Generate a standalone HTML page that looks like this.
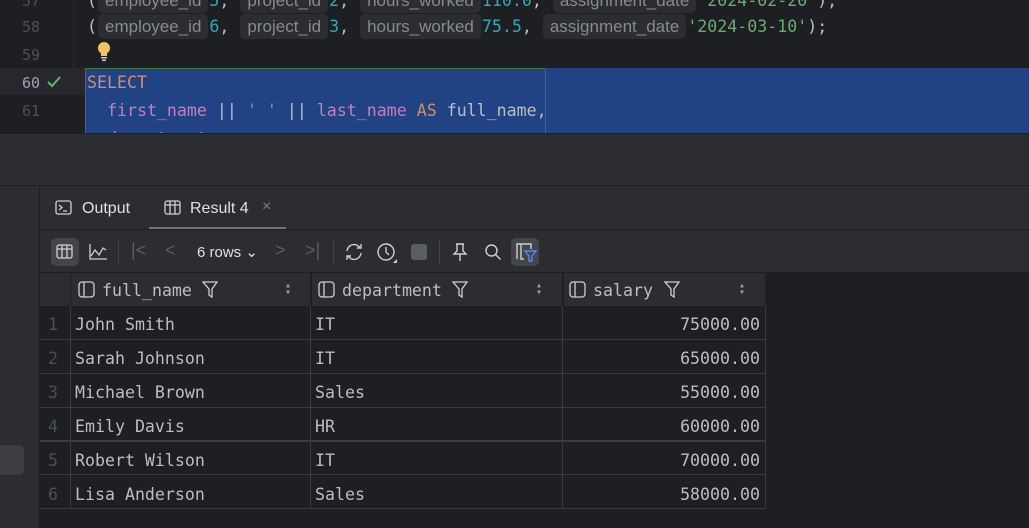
<!DOCTYPE html>
<html><head><meta charset="utf-8"><style>
*{margin:0;padding:0;box-sizing:border-box}
body{width:1029px;height:528px;overflow:hidden;background:#1e1f22;position:relative;font-family:"DejaVu Sans Mono","Liberation Mono",monospace;}
.a{position:absolute}
.ln{position:absolute;left:0;width:40px;text-align:right;color:#4b5059;font-size:15px;line-height:28px}
.code{position:absolute;left:87px;font-size:16.6px;line-height:28px;color:#bcbec4;white-space:pre}
.hint{display:inline-block;background:#2b2d30;color:#868a91;font-family:"Liberation Sans",sans-serif;font-size:17px;line-height:25px;padding:0 7px;border-radius:5px;margin:0 1px;vertical-align:top;margin-top:1px}
.num{color:#2aacb8}.str{color:#6aab73}.kw{color:#cf8e6d}.fn{color:#c77dbb}
.ui{font-family:"Liberation Sans",sans-serif}
.cell{position:absolute;font-size:16.6px;color:#bcbec4;line-height:34px;white-space:pre}
.hl{position:absolute;background:#393b40}
</style></head><body>
<div class="a" style="left:0;top:0;width:1029px;height:133px;background:#1e1f22"></div>
<div class="a" style="left:0;top:68px;width:85px;height:27px;background:#26282e"></div>
<div class="a" style="left:85px;top:68px;width:944px;height:65px;background:#214283"></div>
<div class="a" style="left:85px;top:68px;width:461px;height:65px;border:1px solid #3d7a3a;border-bottom:none"></div>
<div class="ln" style="top:-13px">57</div>
<div class="ln" style="top:13px">58</div>
<div class="ln" style="top:41px">59</div>
<div class="ln" style="top:69px;color:#a1a3ab">60</div>
<div class="ln" style="top:97px">61</div>
<div class="ln" style="top:125px">62</div>
<svg class="a" style="left:46px;top:75px" width="16" height="14"><path d="M2 7l4 4 8-9" stroke="#5fb865" stroke-width="2" fill="none"/></svg>
<div class="code" style="top:-13px">(<span class="hint">employee_id</span><span class="num">5</span>, <span class="hint">project_id</span><span class="num">2</span>, <span class="hint">hours_worked</span><span class="num">110.0</span>, <span class="hint">assignment_date</span><span class="str">'2024-02-20'</span>),</div>
<div class="code" style="top:13px">(<span class="hint">employee_id</span><span class="num">6</span>, <span class="hint">project_id</span><span class="num">3</span>, <span class="hint">hours_worked</span><span class="num">75.5</span>, <span class="hint">assignment_date</span><span class="str">'2024-03-10'</span>);</div>
<svg class="a" style="left:96px;top:41px" width="16" height="21"><circle cx="8" cy="7" r="6" fill="#f2c55c"/><rect x="5" y="11" width="6" height="4" fill="#f2c55c"/><rect x="5" y="16" width="6" height="1.5" fill="#ccc"/><rect x="6" y="18.5" width="4" height="1.5" fill="#ccc"/></svg>
<div class="code" style="top:69px"><span class="kw">SELECT</span></div>
<div class="code" style="top:97px">  <span class="fn">first_name</span> || <span class="str">' '</span> || <span class="fn">last_name</span> <span class="kw">AS</span> full_name,</div>
<div class="code" style="top:125px">  <span class="fn">department</span>,</div>
<div class="a" style="left:73px;top:0;width:1px;height:68px;background:#2b2d30"></div>
<div class="a" style="left:0;top:133px;width:1029px;height:53px;background:#2b2d30;border-top:1px solid #1e1f22"></div>
<div class="a" style="left:0;top:185px;width:1029px;height:1px;background:#1e1f22"></div>
<div class="a" style="left:0;top:186px;width:40px;height:342px;background:#2b2d30;border-right:1px solid #1e1f22"></div>
<div class="a" style="left:0;top:445px;width:24px;height:30px;background:#3c3e43;border-radius:0 5px 5px 0"></div>
<div class="a" style="left:40px;top:186px;width:989px;height:86px;background:#2b2d30"></div>
<div class="a" style="left:40px;top:229px;width:989px;height:1px;background:#1e1f22"></div>
<div class="a" style="left:149px;top:227px;width:137px;height:2px;background:#6f737a"></div>
<svg class="a" style="left:55px;top:200px" width="18" height="16"><rect x="1" y="1" width="15" height="13" rx="2" stroke="#ced0d6" fill="none" stroke-width="1.3"/><path d="M4 5l3 2.5L4 10M8 11h4" stroke="#ced0d6" fill="none" stroke-width="1.3"/></svg>
<div class="a ui" style="left:82px;top:200px;font-size:16px;color:#dfe1e5">Output</div>
<svg class="a" style="left:164px;top:200px" width="18" height="16"><rect x="1" y="1" width="15" height="13" rx="2" stroke="#ced0d6" fill="none" stroke-width="1.3"/><path d="M1 5h15M6 1v13M11 1v13" stroke="#ced0d6" stroke-width="1.3"/></svg>
<div class="a ui" style="left:190px;top:200px;font-size:16px;color:#dfe1e5">Result 4</div>
<div class="a ui" style="left:262px;top:198px;font-size:16px;color:#7a7e85">×</div>
<div class="a" style="left:51px;top:238px;width:28px;height:28px;background:#43454a;border-radius:5px"></div>
<svg class="a" style="left:56px;top:244px" width="18" height="16"><rect x="1" y="1" width="15" height="13" rx="2" stroke="#ced0d6" fill="none" stroke-width="1.3"/><path d="M1 5h15M6 1v13M11 1v13" stroke="#ced0d6" stroke-width="1.3"/></svg>
<svg class="a" style="left:88px;top:243px" width="20" height="18"><path d="M2 1v15h17" stroke="#ced0d6" fill="none" stroke-width="1.3"/><path d="M3 13l4-6 4 5 4-7 3 2" stroke="#ced0d6" fill="none" stroke-width="1.3"/></svg>
<div class="a" style="left:118px;top:240px;width:1px;height:24px;background:#43454a"></div>
<div class="a ui" style="left:131px;top:240px;font-size:18px;color:#5a5d63">|&lt;</div>
<div class="a ui" style="left:165px;top:240px;font-size:18px;color:#5a5d63">&lt;</div>
<div class="a ui" style="left:197px;top:243px;font-size:15px;color:#dfe1e5">6 rows ⌄</div>
<div class="a ui" style="left:275px;top:240px;font-size:18px;color:#5a5d63">&gt;</div>
<div class="a ui" style="left:305px;top:240px;font-size:18px;color:#5a5d63">&gt;|</div>
<div class="a" style="left:333px;top:240px;width:1px;height:24px;background:#43454a"></div>
<svg class="a" style="left:343px;top:242px" width="22" height="20"><path d="M4 9a7 7 0 0 1 13-3M18 11a7 7 0 0 1-13 3" stroke="#ced0d6" fill="none" stroke-width="1.4"/><path d="M14 6h4V2M8 14H4v4" stroke="#ced0d6" fill="none" stroke-width="1.4"/></svg>
<svg class="a" style="left:376px;top:242px" width="22" height="22"><circle cx="10" cy="10" r="8" stroke="#ced0d6" fill="none" stroke-width="1.4"/><path d="M10 5v5l3 3" stroke="#ced0d6" fill="none" stroke-width="1.4"/><path d="M21 17v4h-4z" fill="#ced0d6"/></svg>
<div class="a" style="left:411px;top:244px;width:16px;height:16px;background:#5a5d63;border-radius:3px"></div>
<div class="a" style="left:439px;top:240px;width:1px;height:24px;background:#43454a"></div>
<svg class="a" style="left:451px;top:242px" width="18" height="20"><path d="M5 2h8M6 2v7l-3 3h12l-3-3V2M9 12v7" stroke="#ced0d6" fill="none" stroke-width="1.4"/></svg>
<svg class="a" style="left:484px;top:243px" width="18" height="18"><circle cx="7.5" cy="7.5" r="5.5" stroke="#ced0d6" fill="none" stroke-width="1.4"/><path d="M11.5 11.5l5 5" stroke="#ced0d6" stroke-width="1.4"/></svg>
<div class="a" style="left:511px;top:238px;width:28px;height:28px;background:#43454a;border-radius:5px"></div>
<svg class="a" style="left:515px;top:242px" width="22" height="20"><path d="M2 17V2h14v5M6 2v15h3" stroke="#ced0d6" fill="none" stroke-width="1.4"/><path d="M10 9h11l-4 5v5h-3v-5z" stroke="#548af7" fill="none" stroke-width="1.4"/></svg>
<div class="a" style="left:40px;top:272px;width:725px;height:34px;background:#2b2d30"></div>
<div class="a" style="left:40px;top:272px;width:989px;height:1px;background:#1e1f22"></div>
<div class="a" style="left:70px;top:272px;width:1px;height:34px;background:#1e1f22"></div>
<div class="a" style="left:310px;top:272px;width:2px;height:34px;background:#1e1f22"></div>
<div class="a" style="left:562px;top:272px;width:2px;height:34px;background:#1e1f22"></div>
<svg class="a" style="left:78px;top:281px" width="17" height="17"><rect x="1" y="1" width="15" height="15" rx="3" stroke="#ced0d6" fill="none" stroke-width="1.3"/><path d="M6 1v15" stroke="#ced0d6" stroke-width="1.3"/></svg>
<div class="cell" style="left:102px;top:274px">full_name</div>
<svg class="a" style="left:202px;top:281px" width="16" height="17"><path d="M1 1h14l-5 7v8l-3-2V8z" stroke="#ced0d6" fill="none" stroke-width="1.3"/></svg>
<div class="a" style="left:285px;top:282px;font-size:10px;color:#9a9da3;line-height:7px">▴<br>▾</div>
<svg class="a" style="left:318px;top:281px" width="17" height="17"><rect x="1" y="1" width="15" height="15" rx="3" stroke="#ced0d6" fill="none" stroke-width="1.3"/><path d="M6 1v15" stroke="#ced0d6" stroke-width="1.3"/></svg>
<div class="cell" style="left:342px;top:274px">department</div>
<svg class="a" style="left:452px;top:281px" width="16" height="17"><path d="M1 1h14l-5 7v8l-3-2V8z" stroke="#ced0d6" fill="none" stroke-width="1.3"/></svg>
<div class="a" style="left:536px;top:282px;font-size:10px;color:#9a9da3;line-height:7px">▴<br>▾</div>
<svg class="a" style="left:569px;top:281px" width="17" height="17"><rect x="1" y="1" width="15" height="15" rx="3" stroke="#ced0d6" fill="none" stroke-width="1.3"/><path d="M6 1v15" stroke="#ced0d6" stroke-width="1.3"/></svg>
<div class="cell" style="left:593px;top:274px">salary</div>
<svg class="a" style="left:664px;top:281px" width="16" height="17"><path d="M1 1h14l-5 7v8l-3-2V8z" stroke="#ced0d6" fill="none" stroke-width="1.3"/></svg>
<div class="a" style="left:739px;top:282px;font-size:10px;color:#9a9da3;line-height:7px">▴<br>▾</div>
<div class="hl" style="left:70px;top:306px;width:1px;height:202px"></div>
<div class="hl" style="left:310px;top:306px;width:1px;height:202px"></div>
<div class="hl" style="left:562px;top:306px;width:1px;height:202px"></div>
<div class="hl" style="left:765px;top:306px;width:1px;height:202px"></div>
<div class="hl" style="left:40px;top:339px;width:726px;height:1px"></div>
<div class="hl" style="left:40px;top:373px;width:726px;height:1px"></div>
<div class="hl" style="left:40px;top:407px;width:726px;height:1px"></div>
<div class="hl" style="left:40px;top:440px;width:726px;height:2px"></div>
<div class="hl" style="left:40px;top:474px;width:726px;height:1px"></div>
<div class="hl" style="left:40px;top:508px;width:726px;height:1px"></div>
<div class="cell" style="left:48px;top:308px;color:#4b5059">1</div><div class="cell" style="left:75px;top:308px">John Smith</div><div class="cell" style="left:315px;top:308px">IT</div><div class="cell" style="left:563px;top:308px;width:197px;text-align:right">75000.00</div>
<div class="cell" style="left:48px;top:342px;color:#4b5059">2</div><div class="cell" style="left:75px;top:342px">Sarah Johnson</div><div class="cell" style="left:315px;top:342px">IT</div><div class="cell" style="left:563px;top:342px;width:197px;text-align:right">65000.00</div>
<div class="cell" style="left:48px;top:376px;color:#4b5059">3</div><div class="cell" style="left:75px;top:376px">Michael Brown</div><div class="cell" style="left:315px;top:376px">Sales</div><div class="cell" style="left:563px;top:376px;width:197px;text-align:right">55000.00</div>
<div class="cell" style="left:48px;top:410px;color:#4b5059">4</div><div class="cell" style="left:75px;top:410px">Emily Davis</div><div class="cell" style="left:315px;top:410px">HR</div><div class="cell" style="left:563px;top:410px;width:197px;text-align:right">60000.00</div>
<div class="cell" style="left:48px;top:444px;color:#4b5059">5</div><div class="cell" style="left:75px;top:444px">Robert Wilson</div><div class="cell" style="left:315px;top:444px">IT</div><div class="cell" style="left:563px;top:444px;width:197px;text-align:right">70000.00</div>
<div class="cell" style="left:48px;top:478px;color:#4b5059">6</div><div class="cell" style="left:75px;top:478px">Lisa Anderson</div><div class="cell" style="left:315px;top:478px">Sales</div><div class="cell" style="left:563px;top:478px;width:197px;text-align:right">58000.00</div>
</body></html>
